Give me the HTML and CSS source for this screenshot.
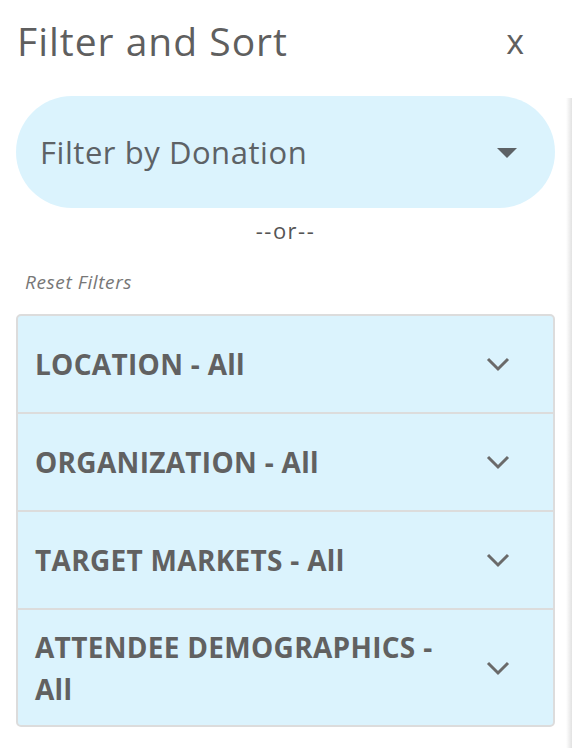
FILE: index.html
```html
<!DOCTYPE html>
<html lang="en">
<head>
    <meta charset="UTF-8">
    <meta name="viewport" content="width=device-width, initial-scale=1.0">
    <title>Filter and Sort</title>
    <link rel="stylesheet" href="styles.css">
</head>
<body>
    <!-- Panneau de filtres -->
    <div class="panel">
        <div class="panel-header">
            <h1>Filter and Sort</h1>
            <span class="close">x</span>
        </div>

        <div class="donation-select">
            <span>Filter by Donation</span>
            <span class="caret"></span>
        </div>

        <div class="or">--or--</div>
        <div class="reset">Reset Filters</div>

        <div class="accordion">
            <div class="acc-item">
                <span class="acc-title">LOCATION - All</span>
                <svg class="chevron" width="24" height="16" viewBox="0 0 24 16"><polyline points="2,3 12,13 22,3" /></svg>
            </div>
            <div class="acc-item">
                <span class="acc-title">ORGANIZATION - All</span>
                <svg class="chevron" width="24" height="16" viewBox="0 0 24 16"><polyline points="2,3 12,13 22,3" /></svg>
            </div>
            <div class="acc-item">
                <span class="acc-title">TARGET MARKETS - All</span>
                <svg class="chevron" width="24" height="16" viewBox="0 0 24 16"><polyline points="2,3 12,13 22,3" /></svg>
            </div>
            <div class="acc-item">
                <span class="acc-title">ATTENDEE DEMOGRAPHICS - All</span>
                <svg class="chevron" width="24" height="16" viewBox="0 0 24 16"><polyline points="2,3 12,13 22,3" /></svg>
            </div>
        </div>
    </div>

    <!-- ombre du panneau voisin -->
    <div class="edge-shadow"></div>
</body>
</html>
```

FILE: styles.css
```css
/* Base */
body, html {
    margin: 0;
    padding: 0;
    font-family: "Open Sans", "Noto Sans", sans-serif;
    color: #616161;
    background: #fff;
    overflow: hidden;
}

.panel {
    padding: 0 17px 0 16px;
    width: 539px;
}

/* En-tête */
.panel-header {
    display: flex;
    justify-content: space-between;
    align-items: center;
    height: 84px;
    padding: 0 31px 0 1px;
}

h1 {
    font-size: 39px;
    font-weight: normal;
    letter-spacing: 1px;
    margin: 0;
    margin-top: -4px;
    color: #5f5f5f;
}

.close {
    font-size: 34px;
    color: #5f5f5f;
    line-height: 1;
    margin-top: -2px;
}

/* Sélecteur de don */
.donation-select {
    margin-top: 12px;
    height: 112px;
    border-radius: 56px;
    background-color: #dbf3fd;
    display: flex;
    align-items: center;
    justify-content: space-between;
    padding: 0 38px 0 24px;
    font-size: 31px;
    letter-spacing: 0.55px;
    color: #5d6266;
}

.caret {
    width: 0;
    height: 0;
    border-left: 10px solid transparent;
    border-right: 10px solid transparent;
    border-top: 10px solid #5d6266;
    margin-top: 1px;
}

.or {
    text-align: center;
    font-size: 22px;
    letter-spacing: 1.5px;
    color: #555;
    margin-top: 8px;
    line-height: 28px;
}

.reset {
    font-style: italic;
    font-size: 19px;
    letter-spacing: 0.6px;
    color: #777;
    padding-left: 9px;
    margin-top: 26px;
    line-height: 24px;
}

/* Accordéon */
.accordion {
    margin-top: 20px;
    border: 2px solid #dcdcdc;
    border-radius: 5px;
    background-color: #dbf3fd;
    overflow: hidden;
}

.acc-item {
    display: flex;
    align-items: center;
    justify-content: space-between;
    min-height: 98px;
    padding: 0 43px 0 17px;
    border-top: 2px solid #dcdcdc;
    box-sizing: border-box;
}

.acc-item:first-child {
    border-top: none;
    min-height: 96px;
}

.acc-item:last-child {
    padding-top: 16px;
    padding-bottom: 15px;
}

.acc-title {
    font-size: 28px;
    font-weight: bold;
    letter-spacing: 0.3px;
    color: #616161;
    line-height: 42px;
    max-width: 420px;
}

.chevron {
    flex-shrink: 0;
}

.chevron polyline {
    fill: none;
    stroke: #6a6a6a;
    stroke-width: 3;
}

.edge-shadow {
    position: absolute;
    top: 98px;
    right: 0;
    width: 6px;
    height: 650px;
    background: linear-gradient(to right, #fff, #e2e2e2);
}
```
